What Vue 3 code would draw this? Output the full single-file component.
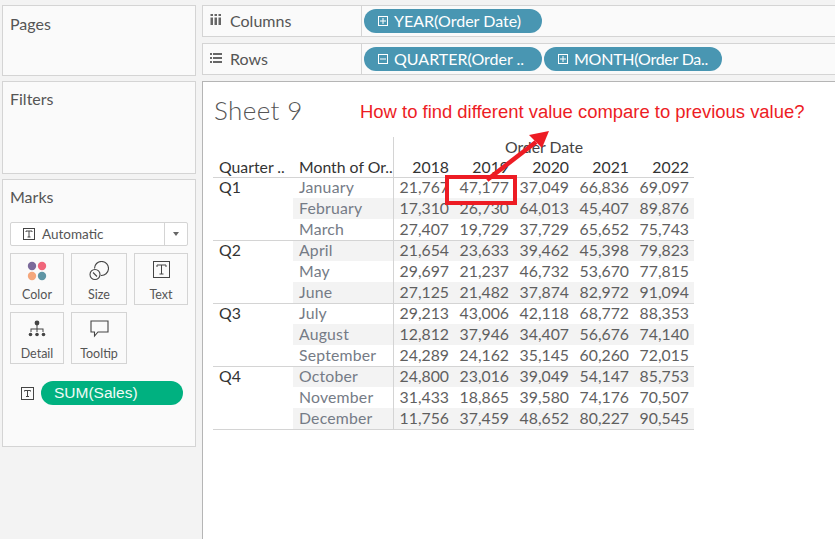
<template>
  <div class="app">
    <aside class="side">
      <section class="panel panel--pages"><h2 class="panel__title">Pages</h2></section>
      <section class="panel panel--filters"><h2 class="panel__title">Filters</h2></section>
      <section class="panel panel--marks">
        <h2 class="panel__title">Marks</h2>
        <div class="markType">
          <span class="markType__label">
            <svg class="tIcon" width="12" height="12" viewBox="0 0 12 12"><rect x="0.5" y="0.5" width="11" height="11" fill="none" stroke="#444" /><path d="M3 4V3h6v1M6 3v6M4.5 9h3" fill="none" stroke="#444" /></svg>
            Automatic
          </span>
          <span class="markType__arrow"><i></i></span>
        </div>
        <div class="cards">
          <div class="card">
            <svg width="20" height="20" viewBox="0 0 20 20">
              <circle cx="5" cy="5" r="4.2" fill="#7b6a9b" />
              <circle cx="15" cy="5" r="4.2" fill="#f0667b" />
              <circle cx="5" cy="15" r="4.2" fill="#f4a77c" />
              <circle cx="15" cy="15" r="4.2" fill="#5f95a5" />
            </svg>
            <span>Color</span>
          </div>
          <div class="card">
            <svg width="20" height="20" viewBox="0 0 20 20" fill="none" stroke="#444" stroke-width="1.1">
              <path d="M5.5 7.6A7 7 0 1 1 11.8 14.4" />
              <circle cx="6" cy="13.5" r="5" />
              <path d="M4 11.5l4 4" />
            </svg>
            <span>Size</span>
          </div>
          <div class="card">
            <svg width="17" height="17" viewBox="0 0 17 17"><rect x="0.5" y="0.5" width="16" height="16" fill="none" stroke="#444" /><path d="M4 6V4h9v2M8.5 4v9M6.5 13h4" fill="none" stroke="#444" /></svg>
            <span>Text</span>
          </div>
          <div class="card">
            <svg width="18" height="18" viewBox="0 0 18 18" fill="#444">
              <circle cx="9" cy="3" r="2.4" />
              <path d="M8.5 5h1v3.5h6V12h-1V9.500h-5V12h-1V9.500h-5V12h-1V8.500h6z" />
              <circle cx="2.500" cy="14.500" r="1.800" />
              <circle cx="9" cy="14.500" r="1.800" />
              <circle cx="15.500" cy="14.500" r="1.800" />
            </svg>
            <span>Detail</span>
          </div>
          <div class="card">
            <svg width="19" height="18" viewBox="0 0 19 18"><path d="M1 1h17v11H8l-3.500 4v-4H1z" fill="none" stroke="#444" stroke-width="1.100" /></svg>
            <span>Tooltip</span>
          </div>
        </div>
        <div class="markField">
          <svg width="13" height="13" viewBox="0 0 13 13"><rect x="0.500" y="0.500" width="12" height="12" fill="none" stroke="#444" /><path d="M3.500 4.500V3.500h6v1M6.500 3.500v6M5 9.500h3" fill="none" stroke="#444" /></svg>
          <span class="markField__pill">SUM(Sales)</span>
        </div>
      </section>
    </aside>

    <main class="content">
      <div class="shelf">
        <div class="shelf__label">
          <svg width="12" height="12" viewBox="0 0 11 12" fill="#666"><path d="M0 0h2.500v2H0zM4 0h2.500v2H4zM8 0h2.500v2H8zM0 3.500h2.500V11H0zM4 3.500h2.500V11H4zM8 3.500h2.500V11H8z" /></svg>
          Columns
        </div>
        <div class="shelf__pills">
          <span class="pill">
            <svg class="pill__box" width="10" height="10" viewBox="0 0 10 10"><rect x="0.500" y="0.500" width="9" height="9" fill="none" stroke="#fff" /><path d="M2 5h6M5 2v6" stroke="#fff" /></svg>
            YEAR(Order Date)
          </span>
        </div>
      </div>
      <div class="shelf">
        <div class="shelf__label">
          <svg width="12" height="10" viewBox="0 0 12 10" fill="#666"><path d="M0 0h2v2H0zM3 0h9v2H3zM0 4h2v2H0zM3 4h9v2H3zM0 8h2v2H0zM3 8h9v2H3z" /></svg>
          Rows
        </div>
        <div class="shelf__pills">
          <span class="pill">
            <svg class="pill__box" width="10" height="10" viewBox="0 0 10 10"><rect x="0.500" y="0.500" width="9" height="9" fill="none" stroke="#fff" /><path d="M2 5h6" stroke="#fff" /></svg>
            QUARTER(Order ..
          </span>
          <span class="pill pill--tight">
            <svg class="pill__box" width="10" height="10" viewBox="0 0 10 10"><rect x="0.500" y="0.500" width="9" height="9" fill="none" stroke="#fff" /><path d="M2 5h6M5 2v6" stroke="#fff" /></svg>
            MONTH(Order Da..
          </span>
        </div>
      </div>

      <div class="view">
        <h1 class="view__title">Sheet 9</h1>
        <div class="crosstab">
          <div class="head head--group">
            <span class="head__blank"></span>
            <span class="head__group">Order Date</span>
          </div>
          <div class="head head--cols">
            <span class="head__dim head__dim--q">Quarter ..</span>
            <span class="head__dim head__dim--m">Month of Or..</span>
            <span v-for="year in years" :key="year" class="head__year">{{ year }}</span>
          </div>
          <div v-for="q in quarters" :key="q.name" class="quarter">
            <div class="quarter__name">{{ q.name }}</div>
            <div class="quarter__rows">
              <div v-for="row in q.rows" :key="row.month" class="row" :class="{ 'is-striped': row.striped }">
                <span class="row__month">{{ row.month }}</span>
                <span v-for="(value, i) in row.values" :key="i" class="row__value">{{ value }}</span>
              </div>
            </div>
          </div>
        </div>

        <!-- annotation drawn over the table -->
        <div class="note">How to find different value compare to previous value?</div>
        <div class="redBox"></div>
        <svg class="arrow" width="80" height="60" viewBox="0 0 80 60">
          <path d="M3 55L52 17" stroke="#ed1c24" stroke-width="4.500" />
          <path d="M65 6L45 10L58 23z" fill="#ed1c24" />
        </svg>
      </div>
    </main>
  </div>
</template>

<script setup>
const years = [2018, 2019, 2020, 2021, 2022];

const table = [
  ["Q1", "January", "21,767", "47,177", "37,049", "66,836", "69,097"],
  ["Q1", "February", "17,310", "26,730", "64,013", "45,407", "89,876"],
  ["Q1", "March", "27,407", "19,729", "37,729", "65,652", "75,743"],
  ["Q2", "April", "21,654", "23,633", "39,462", "45,398", "79,823"],
  ["Q2", "May", "29,697", "21,237", "46,732", "53,670", "77,815"],
  ["Q2", "June", "27,125", "21,482", "37,874", "82,972", "91,094"],
  ["Q3", "July", "29,213", "43,006", "42,118", "68,772", "88,353"],
  ["Q3", "August", "12,812", "37,946", "34,407", "56,676", "74,140"],
  ["Q3", "September", "24,289", "24,162", "35,145", "60,260", "72,015"],
  ["Q4", "October", "24,800", "23,016", "39,049", "54,147", "85,753"],
  ["Q4", "November", "31,433", "18,865", "39,580", "74,176", "70,507"],
  ["Q4", "December", "11,756", "37,459", "48,652", "80,227", "90,545"],
];

const quarters = ["Q1", "Q2", "Q3", "Q4"].map((name) => ({
  name,
  rows: table
    .map(([q, month, ...values], index) => ({ q, month, values, striped: index % 2 === 1 }))
    .filter((row) => row.q === name),
}));
</script>

<style>
html,
body {
  margin: 0;
  overflow: hidden;
  background: #f3f3f3;
}
</style>

<style scoped>
.app {
  width: 835px;
  height: 539px;
  overflow: hidden;
  display: flex;
  background: #f3f3f3;
  font-family: Lato, "Open Sans", sans-serif;
  color: #555;
  box-sizing: border-box;
  padding-top: 5px;
}

.side {
  width: 194px;
  margin-left: 2px;
  display: flex;
  flex-direction: column;
  gap: 5px;
  flex: 0 0 auto;
}

.panel {
  box-sizing: border-box;
  background: #fafafa;
  border: 1px solid #d4d4d4;
  padding: 7px 7px;
}

.panel--pages {
  height: 71px;
  padding-top: 8px;
}

.panel--filters {
  height: 93px;
}

.panel--marks {
  height: 268px;
}

.panel__title {
  margin: 0;
  font-size: 16px;
  font-weight: 400;
  line-height: 20px;
  color: #555;
}

.markType {
  margin-top: 15px;
  height: 24px;
  box-sizing: border-box;
  border: 1px solid #d4d4d4;
  border-radius: 2px;
  background: #fff;
  display: flex;
  align-items: center;
  justify-content: space-between;
  font-size: 13.500px;
}

.markType__label {
  display: flex;
  align-items: center;
  gap: 7px;
  padding-left: 12px;
}

.markType__arrow {
  width: 22px;
  height: 100%;
  border-left: 1px solid #d4d4d4;
  display: flex;
  align-items: center;
  justify-content: center;
}

.markType__arrow i {
  border: 3.500px solid transparent;
  border-top: 4px solid #666;
  border-bottom: 0;
}

.cards {
  margin-top: 7px;
  display: grid;
  grid-template-columns: 54px 56px 54px;
  grid-auto-rows: 52px;
  column-gap: 7px;
  row-gap: 7px;
}

.card {
  box-sizing: border-box;
  border: 1px solid #d4d4d4;
  background: #fafafa;
  display: flex;
  flex-direction: column;
  align-items: center;
  justify-content: space-between;
  padding: 7px 0 1px;
  font-size: 12.500px;
  line-height: 16px;
  color: #555;
}

.markField {
  margin-top: 17px;
  padding-left: 11px;
  display: flex;
  align-items: center;
  gap: 7px;
}

.markField__pill {
  width: 142px;
  height: 24px;
  box-sizing: border-box;
  border-radius: 12px;
  background: #00b180;
  color: #f1fbf7;
  padding-left: 13px;
  font-family: "Liberation Sans", Arial, sans-serif;
  font-size: 15.500px;
  line-height: 24px;
}

.content {
  margin-left: 6px;
  flex: 1 1 auto;
  display: flex;
  flex-direction: column;
  gap: 6px;
  min-width: 0;
}

.shelf {
  height: 32px;
  box-sizing: border-box;
  background: #fafafa;
  border-top: 1px solid #d4d4d4;
  border-bottom: 1px solid #d4d4d4;
  border-left: 1px solid #d4d4d4;
  display: flex;
}

.shelf__label {
  width: 159px;
  box-sizing: border-box;
  border-right: 1px solid #d4d4d4;
  padding-left: 7px;
  padding-bottom: 2px;
  display: flex;
  align-items: center;
  gap: 8px;
  font-size: 16px;
}

.shelf__pills {
  display: flex;
  align-items: center;
  gap: 2px;
  padding-left: 2px;
}

.pill {
  width: 178px;
  height: 24px;
  box-sizing: border-box;
  border-radius: 12px;
  background: #4996b2;
  color: #fff;
  padding-left: 14px;
  padding-bottom: 2px;
  display: flex;
  align-items: center;
  gap: 6px;
  font-size: 16px;
  white-space: nowrap;
}

.pill--tight {
  letter-spacing: -0.25px;
}

.pill__box {
  flex: 0 0 auto;
  margin-top: 2px;
}

.view {
  position: relative;
  flex: 1 1 auto;
  background: #fff;
  border-top: 1px solid #b5b5b5;
  border-left: 1px solid #b5b5b5;
  padding: 10px 0 0 10px;
}

.view__title {
  margin: 0 0 0 1px;
  font-size: 26px;
  font-weight: 300;
  line-height: 36px;
  letter-spacing: 0.4px;
  color: #555;
}

.crosstab {
  width: 481px;
  margin-top: 9px;
  font-size: 15.800px;
  border-bottom: 1px solid #d4d4d4;
}

.head {
  display: flex;
  height: 20px;
  line-height: 20px;
}

.head__blank {
  width: 180px;
  border-right: 1px solid #d4d4d4;
  flex: 0 0 auto;
}

.head__group {
  width: 300px;
  text-align: center;
  color: #444;
}

.head--cols {
  color: #333;
}

.head__dim {
  flex: 0 0 auto;
  white-space: nowrap;
}

.head__dim--q {
  width: 74px;
  padding-left: 6px;
}

.head__dim--m {
  box-sizing: border-box;
  width: 101px;
  padding-left: 6px;
  border-right: 1px solid #d4d4d4;
}

.head__year {
  width: 60px;
  box-sizing: border-box;
  padding-right: 5px;
  text-align: right;
}

.quarter {
  display: flex;
  border-top: 1px solid #d4d4d4;
}

.quarter__name {
  width: 80px;
  flex: 0 0 auto;
  box-sizing: border-box;
  padding-left: 6px;
  line-height: 18px;
  color: #333;
}

.quarter__rows {
  flex: 1 1 auto;
}

.row {
  display: flex;
  height: 21px;
  line-height: 20px;
  color: #5f5f5f;
}

.row:first-child {
  height: 20px;
  line-height: 18px;
}

.row.is-striped {
  background: #f3f3f3;
}

.row__month {
  width: 101px;
  flex: 0 0 auto;
  box-sizing: border-box;
  padding-left: 6px;
  border-right: 1px solid #d4d4d4;
  color: #757b86;
  letter-spacing: 0.2px;
}

.row__value {
  width: 60px;
  box-sizing: border-box;
  padding-right: 5px;
  text-align: right;
}

.note {
  position: absolute;
  left: 157px;
  top: 19px;
  font-family: "Liberation Sans", Arial, sans-serif;
  font-size: 18.450px;
  line-height: 22px;
  color: #ed1c24;
  white-space: nowrap;
}

.redBox {
  position: absolute;
  left: 242px;
  top: 93px;
  width: 72px;
  height: 30px;
  box-sizing: border-box;
  border: 4px solid #ed1c24;
}

.arrow {
  position: absolute;
  left: 281px;
  top: 43px;
}
</style>
